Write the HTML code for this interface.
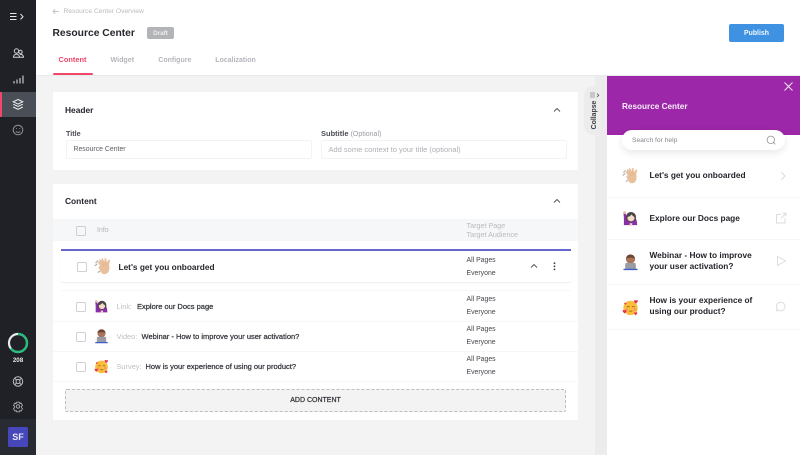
<!DOCTYPE html>
<html><head><meta charset="utf-8"><style>
html,body{margin:0;padding:0}
body{width:800px;height:455px;overflow:hidden;position:relative;background:#f3f3f3;font-family:"Liberation Sans",sans-serif;color:#2a2d33}
div,span.a,svg.a{position:absolute}
.t{white-space:nowrap;line-height:12px}
.b{font-weight:bold}
.sb{-webkit-text-stroke:.25px currentColor}
.g{color:#bfc1c5}
.cb{width:8px;height:8px;border:1px solid #cfd0d3;border-radius:1.5px;background:#fff}
.s{font-size:6.9px;color:#44474c}
.sep{height:1px;background:#f7f7f8}
.r{font-size:7.5px;color:#33363b}
.l{font-size:7.400px}
</style></head><body>
<svg width="0" height="0" style="position:absolute">
<defs>
<symbol id="wave" viewBox="0 0 18 18">
<path d="M1.500 6L4 3.500M.8 9L3.400 6.700M4 15.500l2-1.500" stroke="#a9a9ad" stroke-width="1.100" fill="none"/>
<path d="M6 8.500L4.200 6c-.8-1 .5-1.800 1.200-1L5.200 3.500c-.5-1 .8-1.600 1.500-.8L7.700 4 7.400 2.300c-.2-1 1.200-1.400 1.600-.4l1.300 3 .2-2.900c0-1.100 1.500-1.200 1.700-.2l.6 3.400 1.700-2.200c.7-.9 2-.1 1.500.9L15 7.500c.8 3 .6 6-1 8-2.200 2.400-5 2-6.600.2C6.400 14.300 5 11.500 4.600 10.200z" fill="#e9c09c"/>
<path d="M8.500 6.500l1.500 3M11 5.500l1 3" stroke="#d8a47e" stroke-width=".5" fill="none"/>
</symbol>
<symbol id="woman" viewBox="0 0 18 18">
<path d="M2 16V8L1.500 3.500 3.500 2.500 5 8h8c2.500 1 3 4 3 8z" fill="#8b2fa8"/>
<circle cx="2.700" cy="2.800" r="1.500" fill="#efb59a"/>
<circle cx="9.500" cy="7.500" r="5.400" fill="#4a4548"/>
<circle cx="9.500" cy="8.300" r="3.800" fill="#f4d8c8"/>
<path d="M5.500 7.500c2-.3 4-1.600 4.500-3 1 1.500 2.200 2.600 3.500 3L13 4.500 9 3.500 5.800 5z" fill="#4a4548"/>
<path d="M8 14h3l-.500 3H8.500z" fill="#f4d8c8"/>
</symbol>
<symbol id="tech" viewBox="0 0 18 18">
<circle cx="9" cy="5.500" r="4.800" fill="#a9745a"/>
<path d="M4.200 5C4.500 1.500 7 .5 9 .5s4.500 1 4.800 4.500C12 3.500 6 3.500 4.200 5z" fill="#6d4530"/>
<path d="M3.500 16v-4c0-1.600 2-2.400 5.500-2.400s5.500.8 5.500 2.400v4z" fill="#8a6a5e"/>
<rect x="3.500" y="9.500" width="11" height="6.500" rx=".8" fill="#9a9ca3"/>
<rect x="1.500" y="15.600" width="15" height="1.500" rx=".5" fill="#3e5ecb"/>
</symbol>
<symbol id="love" viewBox="0 0 18 18">
<circle cx="9" cy="9.500" r="7.600" fill="#fbbe3c"/>
<path d="M5 8.500q1.500-1.200 3 0M10.500 8.500q1.500-1.200 3 0M7.500 12.500q2 1 3.500 0" stroke="#8a5a2a" stroke-width=".8" fill="none"/>
<circle cx="5" cy="11.500" r="1.500" fill="#f59a63"/>
<circle cx="13.500" cy="11" r="1.500" fill="#f59a63"/>
<path d="M1 13.500c-1-1.500 1-2.500 1.700-1.200C3.500 11 5.500 12 4.500 13.500L2.700 15.500z" fill="#e8304a"/>
<path d="M13 3c-1-1.500 1-2.500 1.700-1.200C15.500.500 17.500 1.500 16.500 3l-1.800 2z" fill="#e8304a"/>
<path d="M13 15.500c-.8-1.300.9-2.100 1.500-1 .7-1.100 2.300-.3 1.500 1l-1.500 1.800z" fill="#e8304a"/>
<path d="M2.500 5c-.5-1 .6-1.500 1-.8.500-.7 1.600-.2 1 .8l-1 1.200z" fill="#e8304a"/>
</symbol>
</defs></svg>

<!-- header -->
<div style="left:36px;top:0;width:764px;height:75px;background:#fff;border-bottom:1px solid #e9eaeb"></div>

<!-- sidebar -->
<div style="left:0;top:0;width:36px;height:455px;background:#1f2126"></div>
<div style="left:0;top:92px;width:36px;height:25px;background:#4a4f57"></div>
<div style="left:0;top:92px;width:2px;height:25px;background:#f2476b"></div>
<div style="left:0;top:419px;width:36px;height:36px;background:#282b31"></div>
<svg class="a" style="left:0;top:0" width="36" height="455" fill="none" stroke="#cfd1d4" stroke-width="1">
<path d="M10 13.500h6.500M10 16.500h6.500M10 19.500h6.500" stroke="#e6e7e8"/>
<path d="M20.500 14l2.500 2.700-2.500 2.700" stroke="#e6e7e8"/>
<circle cx="16.500" cy="51" r="2.200"/><circle cx="20.500" cy="52" r="1.700"/>
<path d="M13.500 57.300c0-4 6-4 6 0zM20 54.500c2-.5 3.500.8 3.500 2.800h-3.500" />
<path d="M14 83.500v-2.500M17 83.500v-4M20 83.500v-5.500M23 83.500v-8" stroke="#9a9ca1" stroke-width="1.600"/>
<path d="M18 99.500l4.800 2.300-4.800 2.300-4.800-2.300zM13.200 104.200l4.800 2.300 4.800-2.300M13.200 107l4.800 2.300 4.800-2.300" stroke="#f0f0f1"/>
<circle cx="18" cy="130" r="4.800" stroke="#8d9096"/><path d="M15.800 131.500q2.200 1.800 4.400 0M16 128.500h.8M19.400 128.500h.8" stroke="#8d9096"/>
<circle cx="18" cy="343" r="9" stroke="#e8e9ea" stroke-width="2.200"/>
<path d="M18 334a9 9 0 1 1-7.200 14.400" stroke="#21c07c" stroke-width="2.200"/>
<circle cx="18" cy="381.500" r="4.700" stroke="#bfc1c5"/><circle cx="18" cy="381.500" r="2" stroke="#bfc1c5"/>
<path d="M14.800 378.300l1.800 1.800M21.200 378.300l-1.800 1.800M14.800 384.700l1.800-1.800M21.200 384.700l-1.800-1.800" stroke="#bfc1c5"/>
<circle cx="18" cy="406.500" r="1.700" stroke="#a7a9ae"/>
<path d="M16.600 402.200h2.800l.4 1.200 1.300-.4 1.400 2.400-1 .9v1.400l1 .9-1.400 2.400-1.300-.4-.4 1.200h-2.800l-.4-1.200-1.300.4-1.400-2.400 1-.9v-1.400l-1-.9 1.400-2.400 1.300.4z" stroke="#a7a9ae" stroke-width=".9"/>
</svg>
<div class="t b" style="left:0;width:36px;text-align:center;top:354.500px;font-size:6.200px;color:#e6e7e8">208</div>
<div class="t b" style="left:8px;top:427px;width:20px;height:20px;border-radius:1.500px;background:#4547ba;color:#e8e8f6;font-size:9px;line-height:20px;text-align:center">SF</div>

<!-- top bar -->
<svg class="a" style="left:52px;top:8px" width="9" height="7" fill="none" stroke="#b6b8bc" stroke-width=".8"><path d="M7 3.500H1M3.200 1.300L1 3.500l2.200 2.200"/></svg>
<div class="t" style="left:63.500px;top:6px;font-size:6.700px;color:#b9bbbf">Resource Center Overview</div>
<div class="t b" style="left:52.500px;top:28px;font-size:10.300px;color:#25272c">Resource Center</div>
<div class="t b" style="left:147px;top:27px;width:27px;height:12px;line-height:14px;background:#b2b4b8;border-radius:2px;color:#eee;font-size:6.300px;text-align:center">Draft</div>
<div class="t b" style="left:729px;top:24px;width:55px;height:18px;line-height:20px;background:#3f92e2;border-radius:2px;color:#f4f8fd;font-size:6.900px;text-align:center">Publish</div>
<div class="t b" style="left:58.500px;top:54px;font-size:7.400px;color:#f2476b">Content</div>
<div class="t b" style="left:110.500px;top:54px;font-size:7.100px;color:#b4b6bb">Widget</div>
<div class="t b" style="left:158.300px;top:54.500px;font-size:7px;color:#b4b6bb">Configure</div>
<div class="t b" style="left:215.300px;top:54.500px;font-size:7px;color:#b4b6bb">Localization</div>
<div style="left:52.500px;top:73px;width:40.500px;height:2px;background:#f2476b;border-radius:1px"></div>

<!-- right strip -->
<div style="left:595px;top:76px;width:12px;height:379px;background:#ececec"></div>
<div style="left:584px;top:86px;width:23px;height:49px;background:#ececec;border-radius:10px 0 0 10px"></div>
<svg class="a" style="left:589px;top:92px" width="16" height="8" fill="none" stroke="#8b8d92" stroke-width=".8"><path d="M1 1h5M1 3h5M1 5h5"/><path d="M8 1.500l1.800 1.700L8 5" stroke="#55585d"/></svg>
<div class="t b" style="left:595px;top:114.500px;font-size:6.900px;color:#3d4045;transform:translate(-50%,-50%) rotate(-90deg)">Collapse</div>

<!-- header card -->
<div style="left:53px;top:92px;width:525px;height:78px;background:#fff;border-radius:1px"></div>
<div class="t b" style="left:65px;top:103.500px;font-size:8.400px;color:#25272c">Header</div>
<div class="t b" style="left:66px;top:127.500px;font-size:7.200px;color:#4a4d52">Title</div>
<div style="left:66px;top:140px;width:244px;height:17px;border:1px solid #f2f3f5;border-radius:2px;background:#fff"></div>
<div class="t" style="left:73.500px;top:144px;font-size:6.900px;color:#5b5e63">Resource Center</div>
<div class="t" style="left:321px;top:127.500px;font-size:7.500px;color:#4a4d52"><b>Subtitle</b> <span style="color:#9a9ca1;font-size:7px">(Optional)</span></div>
<div style="left:321px;top:140px;width:244px;height:17px;border:1px solid #f2f3f5;border-radius:2px;background:#fff"></div>
<div class="t" style="left:328.500px;top:144px;font-size:7.500px;color:#aeb0b5">Add some context to your title (optional)</div>
<svg class="a" style="left:553px;top:107px" width="8" height="6" fill="none" stroke="#4b4e53" stroke-width=".9"><path d="M1 4.500l3-3 3 3"/></svg>

<!-- content card -->
<div style="left:53px;top:184px;width:525px;height:236px;background:#fff;border-radius:1px"></div>
<div class="t b" style="left:65px;top:195px;font-size:8.400px;color:#25272c">Content</div>
<svg class="a" style="left:553px;top:198px" width="8" height="6" fill="none" stroke="#4b4e53" stroke-width=".9"><path d="M1 4.500l3-3 3 3"/></svg>
<div style="left:53px;top:219px;width:525px;height:22px;background:#f6f7f9"></div>
<div class="cb" style="left:76px;top:226px;background:#f6f7f9"></div>
<div class="t" style="left:97px;top:225px;font-size:7px;color:#b4b6bb">Info</div>
<div class="t" style="left:466.500px;top:222px;font-size:7.200px;color:#b9bbbf;line-height:8.500px">Target Page<br>Target Audience</div>

<!-- highlight row -->
<div style="left:61px;top:250px;width:510px;height:32px;background:#fff;box-shadow:0 1px 1px #eeeff0;border-radius:1px"></div>
<div style="left:61px;top:249px;width:510px;height:2px;background:#6668cf"></div>
<div class="cb" style="left:77px;top:262px"></div>
<svg class="a" style="left:94px;top:257px" width="18" height="18"><use href="#wave"/></svg>
<div class="t b" style="left:118.500px;top:260.500px;font-size:8.300px;color:#25272c">Let's get you onboarded</div>
<div class="t s" style="left:466.500px;top:254.500px">All Pages</div>
<div class="t s" style="left:466.500px;top:267.500px">Everyone</div>
<svg class="a" style="left:530px;top:263px" width="8" height="6" fill="none" stroke="#4b4e53" stroke-width=".9"><path d="M1 4.500l3-3 3 3"/></svg>
<svg class="a" style="left:552px;top:262px" width="5" height="9" fill="#3a3d42"><circle cx="2.500" cy="1.200" r=".9"/><circle cx="2.500" cy="4.300" r=".9"/><circle cx="2.500" cy="7.400" r=".9"/></svg>
<div style="left:61px;top:290px;width:510px;height:1px;background:#f7f7f8"></div>

<!-- rows -->
<div class="cb" style="left:76px;top:302px"></div>
<svg class="a" style="left:94px;top:299px" width="15" height="15"><use href="#woman"/></svg>
<div class="t g l" style="left:116.500px;top:300.500px">Link:</div>
<div class="t sb r" style="left:137px;top:300.500px">Explore our Docs page</div>
<div class="t s" style="left:466.500px;top:294px">All Pages</div>
<div class="t s" style="left:466.500px;top:307px">Everyone</div>
<div class="sep" style="left:53px;top:321px;width:525px"></div>

<div class="cb" style="left:76px;top:332px"></div>
<svg class="a" style="left:94px;top:329px" width="15" height="15"><use href="#tech"/></svg>
<div class="t g l" style="left:116.500px;top:330.500px">Video:</div>
<div class="t sb r" style="left:141.500px;top:330.500px">Webinar - How to improve your user activation?</div>
<div class="t s" style="left:466.500px;top:324px">All Pages</div>
<div class="t s" style="left:466.500px;top:337px">Everyone</div>
<div class="sep" style="left:53px;top:351px;width:525px"></div>

<div class="cb" style="left:76px;top:362px"></div>
<svg class="a" style="left:94px;top:359px" width="15" height="15"><use href="#love"/></svg>
<div class="t g l" style="left:116.500px;top:360.500px">Survey:</div>
<div class="t sb r" style="left:145.500px;top:360.500px">How is your experience of using our product?</div>
<div class="t s" style="left:466.500px;top:354px">All Pages</div>
<div class="t s" style="left:466.500px;top:367px">Everyone</div>
<div class="sep" style="left:53px;top:381px;width:525px"></div>

<div class="t sb" style="left:65px;top:389px;width:501px;height:23px;box-sizing:border-box;border:1px dashed #bdbec1;border-radius:2px;background:#f3f3f3;text-align:center;line-height:22px;font-size:7px;color:#33363b">ADD CONTENT</div>

<!-- preview panel -->
<div style="left:607px;top:76px;width:193px;height:379px;background:#fff"></div>
<div style="left:607px;top:76px;width:193px;height:59px;background:#9c27a8"></div>
<svg class="a" style="left:783px;top:81px" width="11" height="11" fill="none" stroke="#f4e6f6" stroke-width="1"><path d="M1.500 1.500l8 8M9.500 1.500l-8 8"/></svg>
<div class="t b" style="left:622px;top:101px;font-size:8.200px;color:#f8eefa">Resource Center</div>
<div style="left:622px;top:130px;width:163px;height:20px;background:#fff;border-radius:10px;box-shadow:0 3px 8px rgba(0,0,0,.09)"></div>
<div class="t" style="left:632px;top:135px;font-size:6.700px;color:#85878c">Search for help</div>
<svg class="a" style="left:765px;top:134px" width="12" height="12" fill="none" stroke="#93959a" stroke-width=".8"><circle cx="5.800" cy="5.800" r="3.700"/><path d="M8.500 8.500l1.800 1.800"/></svg>

<svg class="a" style="left:622px;top:167px" width="17" height="17"><use href="#wave"/></svg>
<div class="t b" style="left:649.500px;top:169px;font-size:8.300px;color:#22242a">Let's get you onboarded</div>
<svg class="a" style="left:779px;top:170px" width="8" height="12" fill="none" stroke="#dcdde0" stroke-width="1"><path d="M2 2l4 4-4 4"/></svg>
<div class="sep" style="left:607px;top:197px;width:193px"></div>

<svg class="a" style="left:622px;top:210px" width="17" height="17"><use href="#woman"/></svg>
<div class="t b" style="left:649.500px;top:212px;font-size:8.300px;color:#22242a">Explore our Docs page</div>
<svg class="a" style="left:775px;top:212px" width="12" height="12" fill="none" stroke="#dcdde0" stroke-width="1"><path d="M6 2.500H1.500v8.500h8.500V6.500M6 6.500L10.500 1.500M7.500 1.200h3.300v3.300"/></svg>
<div class="sep" style="left:607px;top:239px;width:193px"></div>

<svg class="a" style="left:622px;top:254px" width="17" height="17"><use href="#tech"/></svg>
<div class="t b" style="left:649.500px;top:250px;font-size:8.300px;color:#22242a;line-height:11px">Webinar - How to improve<br>your user activation?</div>
<svg class="a" style="left:776px;top:255px" width="11" height="12" fill="none" stroke="#dcdde0" stroke-width="1"><path d="M1.500 1.500l8 4.500-8 4.500z"/></svg>
<div class="sep" style="left:607px;top:284px;width:193px"></div>

<svg class="a" style="left:622px;top:299px" width="17" height="17"><use href="#love"/></svg>
<div class="t b" style="left:649.500px;top:295px;font-size:8.300px;color:#22242a;line-height:11px">How is your experience of<br>using our product?</div>
<svg class="a" style="left:775px;top:301px" width="11" height="11" fill="none" stroke="#dcdde0" stroke-width="1"><path d="M5.800 1.200a4.300 4.300 0 1 1-2.600 7.800L1.500 10l.6-2.200A4.300 4.300 0 0 1 5.800 1.200z"/></svg>
<div class="sep" style="left:607px;top:329px;width:193px"></div>
</body></html>
